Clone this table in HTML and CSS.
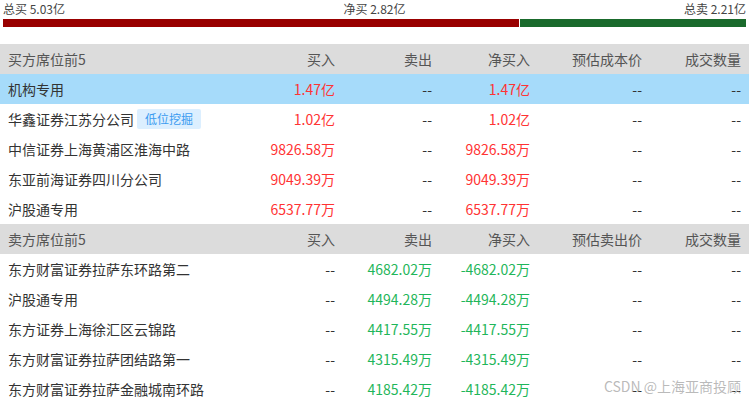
FILE: index.html
```html
<!DOCTYPE html>
<html lang="zh">
<head>
<meta charset="utf-8">
<link rel="stylesheet" href="styles.css">
</head>
<body>
<div class="page">
  <div class="summary">
    <div class="summary-text">
      <span>总买 5.03亿</span>
      <span>净买 2.82亿</span>
      <span>总卖 2.21亿</span>
    </div>
    <div class="bar">
      <div class="bar-buy" style="width:69.47%"></div>
      <div class="bar-sell"></div>
    </div>
  </div>

  <div class="table">
    <div class="row head">
      <div class="c name">买方席位前5</div>
      <div class="c">买入</div>
      <div class="c">卖出</div>
      <div class="c">净买入</div>
      <div class="c">预估成本价</div>
      <div class="c">成交数量</div>
    </div>
    <div class="row active">
      <div class="c name">机构专用</div>
      <div class="c red">1.47亿</div>
      <div class="c">--</div>
      <div class="c red">1.47亿</div>
      <div class="c">--</div>
      <div class="c">--</div>
    </div>
    <div class="row">
      <div class="c name">华鑫证券江苏分公司<span class="tag">低位挖掘</span></div>
      <div class="c red">1.02亿</div>
      <div class="c">--</div>
      <div class="c red">1.02亿</div>
      <div class="c">--</div>
      <div class="c">--</div>
    </div>
    <div class="row">
      <div class="c name">中信证券上海黄浦区淮海中路</div>
      <div class="c red">9826.58万</div>
      <div class="c">--</div>
      <div class="c red">9826.58万</div>
      <div class="c">--</div>
      <div class="c">--</div>
    </div>
    <div class="row">
      <div class="c name">东亚前海证券四川分公司</div>
      <div class="c red">9049.39万</div>
      <div class="c">--</div>
      <div class="c red">9049.39万</div>
      <div class="c">--</div>
      <div class="c">--</div>
    </div>
    <div class="row">
      <div class="c name">沪股通专用</div>
      <div class="c red">6537.77万</div>
      <div class="c">--</div>
      <div class="c red">6537.77万</div>
      <div class="c">--</div>
      <div class="c">--</div>
    </div>

    <div class="row head">
      <div class="c name">卖方席位前5</div>
      <div class="c">买入</div>
      <div class="c">卖出</div>
      <div class="c">净买入</div>
      <div class="c">预估卖出价</div>
      <div class="c">成交数量</div>
    </div>
    <div class="row">
      <div class="c name">东方财富证券拉萨东环路第二</div>
      <div class="c">--</div>
      <div class="c green">4682.02万</div>
      <div class="c green">-4682.02万</div>
      <div class="c">--</div>
      <div class="c">--</div>
    </div>
    <div class="row">
      <div class="c name">沪股通专用</div>
      <div class="c">--</div>
      <div class="c green">4494.28万</div>
      <div class="c green">-4494.28万</div>
      <div class="c">--</div>
      <div class="c">--</div>
    </div>
    <div class="row">
      <div class="c name">东方证券上海徐汇区云锦路</div>
      <div class="c">--</div>
      <div class="c green">4417.55万</div>
      <div class="c green">-4417.55万</div>
      <div class="c">--</div>
      <div class="c">--</div>
    </div>
    <div class="row">
      <div class="c name">东方财富证券拉萨团结路第一</div>
      <div class="c">--</div>
      <div class="c green">4315.49万</div>
      <div class="c green">-4315.49万</div>
      <div class="c">--</div>
      <div class="c">--</div>
    </div>
    <div class="row">
      <div class="c name">东方财富证券拉萨金融城南环路</div>
      <div class="c">--</div>
      <div class="c green">4185.42万</div>
      <div class="c green">-4185.42万</div>
      <div class="c">--</div>
      <div class="c">--</div>
    </div>
  </div>

  <div class="watermark">CSDN @上海亚商投顾</div>
</div>
</body>
</html>
```

FILE: styles.css
```css
* { box-sizing: border-box; }
html, body {
  margin: 0;
  padding: 0;
  background: #fff;
  overflow: hidden;
}
body {
  font-family: "Noto Sans CJK SC", "Microsoft YaHei", sans-serif;
  color: #333;
}
.page {
  position: relative;
  width: 749px;
  height: 401px;
  overflow: hidden;
}
.summary {
  padding: 0 3px;
  margin-bottom: 17px;
}
.summary-text {
  display: flex;
  justify-content: space-between;
  font-size: 12px;
  line-height: 18px;
  height: 18px;
  color: #444;
}
.bar {
  display: flex;
  gap: 1px;
  height: 8px;
  margin-top: 1px;
}
.bar-buy { background: #990000; }
.bar-sell { flex: 1; background: #1a6a2c; }

.table {
  display: flex;
  flex-direction: column;
}
.row {
  display: grid;
  grid-template-columns: 245px 98px 97px 98px 112px 99px;
  height: 30px;
  align-items: center;
  font-size: 14px;
}
.row.head {
  background: #dcdcdc;
  color: #555;
}
.row.active {
  background: #a6dbfa;
}
.c {
  text-align: right;
  padding-right: 8px;
  white-space: nowrap;
  line-height: 20px;
}
.c.name {
  text-align: left;
  padding-left: 8px;
  padding-right: 0;
  display: flex;
  align-items: center;
}
.red { color: #ff3333; }
.green { color: #1fb65a; }
.tag {
  display: inline-block;
  margin-left: 3px;
  height: 20px;
  line-height: 20px;
  padding: 0 8px;
  font-size: 12px;
  color: #3a9bf0;
  background: #dcefff;
  border-radius: 2px;
}
.watermark {
  position: absolute;
  right: 8px;
  bottom: 6px;
  font-size: 14px;
  line-height: 18px;
  color: rgba(140, 140, 140, 0.6);
}
```
